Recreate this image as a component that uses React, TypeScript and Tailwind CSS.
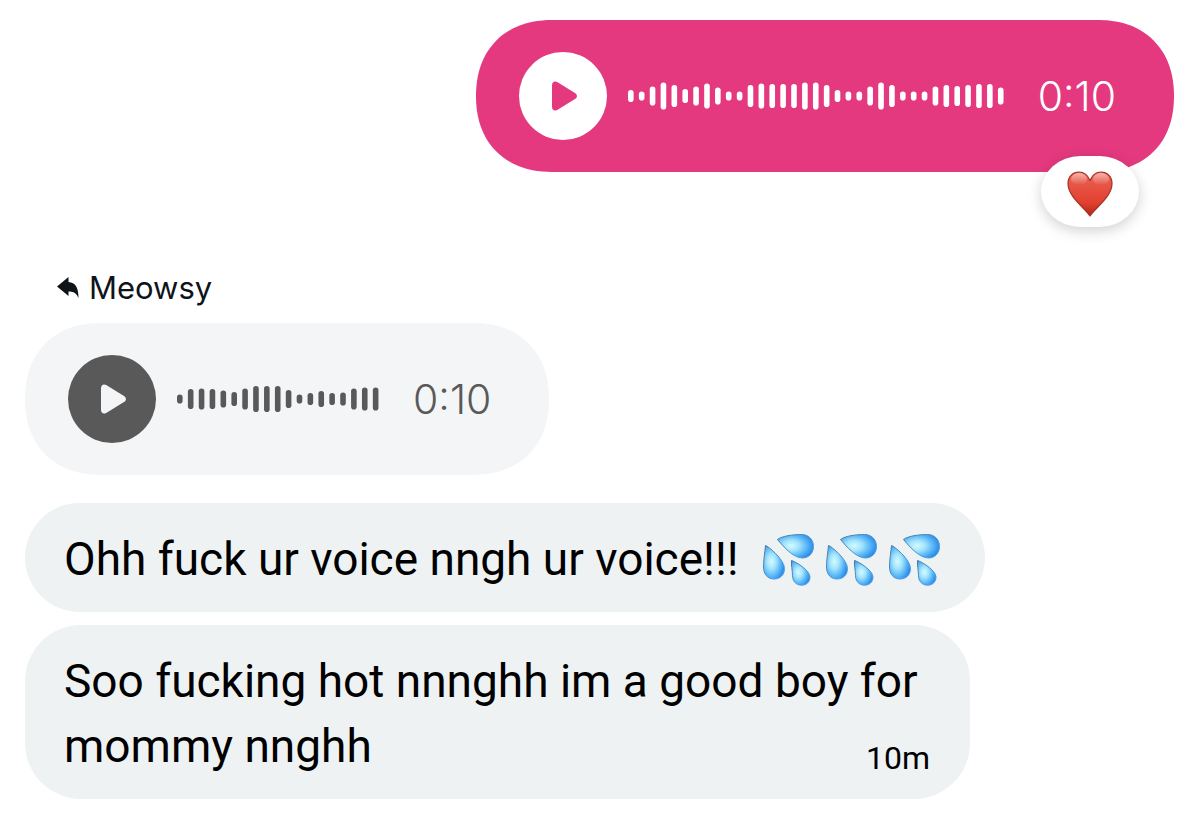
import React from "react"
import { clsx } from "clsx"

const SENT_WAVE = [
  12, 9, 19, 27, 22, 14, 19, 25, 17, 9, 9, 22, 25, 24, 24, 24, 27, 27, 22, 12,
  9, 9, 19, 27, 22, 9, 9, 9, 19, 22, 20, 22, 24, 24, 17,
]
const REPLY_WAVE = [
  9, 20, 21, 20, 17, 14, 21, 26, 26, 26, 18, 9, 12, 16, 12, 13, 21, 23, 23,
]

const BAR_STEP = 10.88
const BAR_WIDTH = 5.6

const Waveform = ({ bars }: { bars: number[] }) => {
  const width = Math.ceil((bars.length - 1) * BAR_STEP + BAR_WIDTH)
  return (
    <svg
      width={width}
      height={28}
      viewBox={`0 0 ${width} 28`}
      fill="currentColor"
      aria-hidden="true"
    >
      {bars.map((height, i) => (
        <rect
          key={i}
          x={i * BAR_STEP}
          y={14 - height / 2}
          width={BAR_WIDTH}
          height={height}
          rx={BAR_WIDTH / 2}
        />
      ))}
    </svg>
  )
}

const VoiceMessage = ({
  bars,
  duration,
  sent = false,
}: {
  bars: number[]
  duration: string
  sent?: boolean
}) => (
  <div
    className={clsx(
      "flex w-fit items-center rounded-[80px] py-8 pr-[58px] pl-[43px] [corner-shape:superellipse(1.15)]",
      sent ? "bg-[#e4397f] text-white" : "bg-[#f4f5f7] text-[#595959]"
    )}
  >
    <button
      type="button"
      aria-label="Play voice message"
      className={clsx(
        "flex size-[88px] items-center justify-center rounded-full",
        sent ? "bg-white text-[#e4397f]" : "bg-[#595959] text-[#f4f5f7]"
      )}
    >
      <svg
        width="30"
        height="32"
        viewBox="0 0 30 32"
        fill="currentColor"
        aria-hidden="true"
      >
        <path d="M4 5.2C4 1.9 6.6.6 9.2 2.1L27 12.9c2.6 1.6 2.6 4.6 0 6.2L9.2 29.9C6.6 31.4 4 30.1 4 26.8Z" />
      </svg>
    </button>
    <div className="ml-[21px]">
      <Waveform bars={bars} />
    </div>
    <span className="ml-[34px] font-[Inter] text-[41px] leading-10 font-light">
      {duration}
    </span>
  </div>
)

const Heart = () => (
  <svg
    width="46"
    height="46"
    viewBox="0 0 46 46"
    role="img"
    aria-label="Red heart"
  >
    <defs>
      <linearGradient id="heart-fill" x1="0" y1="0" x2="0" y2="1">
        <stop offset="0" stopColor="#e9695b" />
        <stop offset="0.3" stopColor="#e75446" />
        <stop offset="0.7" stopColor="#e2402f" />
        <stop offset="1" stopColor="#a8281b" />
      </linearGradient>
      <linearGradient id="heart-shine" x1="0" y1="0" x2="0" y2="1">
        <stop offset="0" stopColor="#fff" stopOpacity="0.5" />
        <stop offset="1" stopColor="#fff" stopOpacity="0" />
      </linearGradient>
    </defs>
    <path
      d="M23 45C18 37 1 26 1 12.500C1 5.500 6 1 12 1C17 1 21 4.500 23 9.500C25 4.500 29 1 34 1C40 1 45 5.500 45 12.500C45 26 28 37 23 45Z"
      fill="url(#heart-fill)"
      stroke="#a23325"
      strokeWidth="1.2"
      strokeLinejoin="round"
    />
    <ellipse cx="12" cy="8" rx="8" ry="6" fill="url(#heart-shine)" />
    <ellipse cx="34" cy="8" rx="8" ry="6" fill="url(#heart-shine)" />
  </svg>
)

const Droplets = () => (
  <svg
    className="size-[52px]"
    viewBox="0 0 52 52"
    role="img"
    aria-label="Sweat droplets"
    fill="url(#drop-fill)"
    stroke="url(#drop-edge)"
    strokeWidth="1"
    strokeLinejoin="round"
  >
    <defs>
      <radialGradient id="drop-fill" cx="0.38" cy="0.48" r="0.62">
        <stop offset="0" stopColor="#d3fbff" />
        <stop offset="0.35" stopColor="#a5e4fd" />
        <stop offset="0.72" stopColor="#57b5f7" />
        <stop offset="1" stopColor="#2f8be6" />
      </radialGradient>
      <linearGradient id="drop-edge" x1="0" y1="0" x2="1" y2="1">
        <stop offset="0" stopColor="#4b7896" />
        <stop offset="0.7" stopColor="#479ee8" />
      </linearGradient>
    </defs>
    <path d="M2.500 11.500C4 11.500 21.500 25 21.500 34.500C21.500 41 17 45 11 45C4.500 45 .500 40 .500 33C.500 25 2 18 2.500 11.500Z" />
    <path d="M14.500 5.500C19 2 30 .500 38.500 .500C46 .500 50.500 6 50.500 12.500C50.500 19 46 24 39.500 24C30 24 20 12 14.500 5.500Z" />
    <path d="M28.500 26.500C32 27.500 47 36 47 43C47 48 43.500 51.200 38.500 51.200C33 51.200 29.500 47 29.500 41.500C29.500 36 28 31 28.500 26.500Z" />
  </svg>
)

const ReplyLabel = ({ name }: { name: string }) => (
  <div className="flex items-center gap-[10px] pl-8 text-[#0f1419]">
    <svg
      width="22"
      height="22"
      viewBox="0 0 22 22"
      fill="currentColor"
      aria-hidden="true"
    >
      <path d="M0 9.500L11.500 0V5C18.500 5.500 21.500 10.500 21.500 21C19.500 16.500 17 14.500 11.500 14.500V19Z" />
    </svg>
    <span className="font-[Inter] text-[31px] leading-10">{name}</span>
  </div>
)

export default function App() {
  return (
    <main className="min-h-screen bg-white px-[25px] py-5 font-[Roboto,sans-serif] text-[46px] leading-[65px] text-black">
      <div className="relative ml-auto w-fit">
        <VoiceMessage bars={SENT_WAVE} duration="0:10" sent />
        <div className="absolute right-[35px] -bottom-[55px] flex h-[71px] w-[98px] items-center justify-center rounded-[40px/36px] bg-white pt-1 shadow-[0_4px_14px_rgba(0,0,0,0.18)]">
          <Heart />
        </div>
      </div>

      <div className="mt-24 flex flex-col items-start">
        <ReplyLabel name="Meowsy" />
        <div className="mt-[15px]">
          <VoiceMessage bars={REPLY_WAVE} duration="0:10" />
        </div>

        <div className="mt-7 flex items-center gap-6 rounded-[56px] bg-[#eef2f3] pt-6 pr-11 pb-5 pl-[39px]">
          <p>Ohh fuck ur voice nngh ur voice!!!</p>
          <div className="flex gap-[11px]">
            <Droplets />
            <Droplets />
            <Droplets />
          </div>
        </div>

        <div className="mt-[13px] w-full max-w-[945px] rounded-[56px] bg-[#eef2f3] pt-6 pr-10 pb-5 pl-[39px]">
          <span>Soo fucking hot nnnghh im a good boy for mommy nnghh</span>
          <time className="float-right mt-6 text-[32px] leading-10">10m</time>
        </div>
      </div>
    </main>
  )
}
